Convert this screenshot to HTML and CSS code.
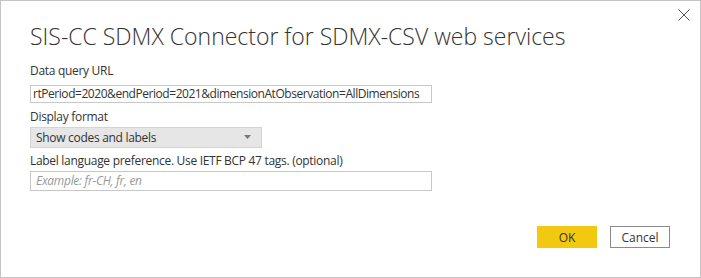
FILE: index.html
```html
<html>
  <head>
    <link rel="stylesheet" href="styles.css">
  </head>
  <body>
    <div class="dialog">
      <button class="close-btn" aria-label="Close">
        <svg width="12" height="12" viewBox="0 0 12 12"><path d="M0.5 0.5L11.5 11.5M11.5 0.5L0.5 11.5" stroke="#555" stroke-width="1" fill="none"/></svg>
      </button>
      <h1 class="title">SIS-CC SDMX Connector for SDMX-CSV web services</h1>
      <main class="form">
        <label class="field-label">Data query URL</label>
        <div class="text-input url-input">rtPeriod=2020&amp;endPeriod=2021&amp;dimensionAtObservation=AllDimensions</div>
        <label class="field-label">Display format</label>
        <div class="select">
          <span>Show codes and labels</span>
          <svg class="caret" width="7" height="4" viewBox="0 0 7 4"><path d="M0 0H7L3.5 4Z" fill="#777"/></svg>
        </div>
        <label class="field-label">Label language preference. Use IETF BCP 47 tags. (optional)</label>
        <div class="text-input placeholder">Example: fr-CH, fr, en</div>
      </main>
      <footer class="actions">
        <button class="btn btn-primary">OK</button>
        <button class="btn btn-secondary">Cancel</button>
      </footer>
    </div>
  </body>
</html>
```

FILE: styles.css
```css
body {
  margin: 0;
  font-family: "Open Sans", "Noto Sans", sans-serif;
  color: #333;
}
.dialog {
  position: relative;
  width: 701px;
  height: 278px;
  box-sizing: border-box;
  border: 1px solid #c4c4c4;
  background: #fff;
  padding: 0 29px;
}
.close-btn {
  position: absolute;
  top: 8px;
  right: 10px;
  border: none;
  background: none;
  padding: 0;
  width: 12px;
  height: 12px;
  line-height: 0;
}
.title {
  margin: 0;
  padding-top: 19px;
  height: 32px;
  font-size: 23px;
  font-weight: 300;
  line-height: 32px;
  color: #333;
  white-space: nowrap;
}
.form {
  display: flex;
  flex-direction: column;
  margin-top: 11px;
  letter-spacing: -0.3px;
}
.field-label {
  font-size: 12px;
  line-height: 16px;
  height: 17px;
  color: #333;
  margin-bottom: 5px;
}
.text-input {
  width: 402px;
  height: 18px;
  box-sizing: border-box;
  border: 1px solid #c8c8c8;
  padding: 0 2px;
  font-size: 12px;
  line-height: 16px;
  white-space: nowrap;
  overflow: hidden;
  margin-bottom: 6px;
}
.url-input {
  letter-spacing: -0.45px;
}
.placeholder {
  height: 20px;
  line-height: 18px;
  padding-left: 5px;
  font-style: italic;
  color: #999;
}
.select {
  display: flex;
  align-items: center;
  justify-content: space-between;
  width: 232px;
  height: 21px;
  box-sizing: border-box;
  border: 1px solid #d4d4d4;
  background: #e6e6e6;
  padding: 0 10px 0 5px;
  font-size: 12px;
  margin-top: -4px;
  margin-bottom: 5px;
}
.field-label + .placeholder {
  margin-top: -4px;
}
.caret {
  margin-bottom: 2px;
}
.actions {
  display: flex;
  justify-content: flex-end;
  gap: 13px;
  margin-top: 29px;
  padding-right: 1px;
}
.btn {
  width: 60px;
  height: 22px;
  box-sizing: border-box;
  font-family: inherit;
  font-size: 12px;
  color: #333;
  padding: 0;
}
.btn-primary {
  background: #f2c811;
  border: 1px solid #f2c811;
}
.btn-secondary {
  background: #fff;
  border: 1px solid #8a8a8a;
}
```
